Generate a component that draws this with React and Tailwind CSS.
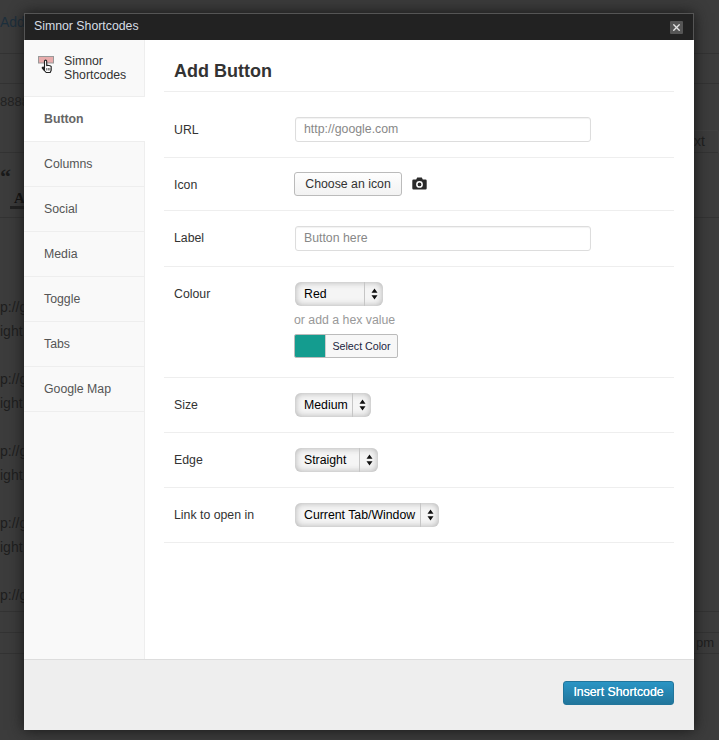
import { X } from "lucide-react";

const sideItems = ["Columns", "Social", "Media", "Toggle", "Tabs", "Google Map"];

const bgLines = [72, 72, 72, 72];

const Arrows = () => (
  <svg width="7" height="12" viewBox="0 0 7 12" className="block">
    <path d="M3.5 0.5 L6.5 4.8 L0.5 4.8 Z M3.5 11.5 L0.5 7.2 L6.5 7.2 Z" fill="#111" />
  </svg>
);

const Select = ({ label, width, textWidth }) => (
  <div
    className={`flex h-6 items-stretch rounded-[6px] bg-[#f5f5f5] text-[12.3px] text-black shadow-[inset_0_0_7px_#ababab] ${width}`}
  >
    <div className={`flex items-center pl-[9px] ${textWidth}`}>{label}</div>
    <div className="w-px bg-[#c6c6c6]" />
    <div className="flex flex-1 items-center justify-center">
      <Arrows />
    </div>
  </div>
);

const Row = ({ label, height, labelClass, className, children }) => (
  <div className={`flex border-b border-[#eeeeee] px-[10px] ${height} ${className || "items-center"}`}>
    <div className={`w-[120px] shrink-0 text-[12.3px] text-[#333] ${labelClass || ""}`}>{label}</div>
    <div className="flex-1">{children}</div>
  </div>
);

const TextBox = ({ placeholder }) => (
  <div className="ml-px flex h-[25px] w-[296px] items-center rounded-[3px] border border-[#dddddd] bg-white px-2 text-[12.3px] text-[#888] shadow-[inset_0_1px_1px_#f2f2f2]">
    {placeholder}
  </div>
);

const App = () => {
  return (
    <div className="relative h-[740px] w-[719px] overflow-hidden bg-[#3c3c3c] font-['Liberation_Sans',Arial,sans-serif]">
      {/* page behind the modal */}
      <div className="flex h-full flex-col text-[14px] text-[#1e1e1e]">
        <div className="h-[54px] border-b border-[#333] pt-[12px] text-[#1c2f3c]">Add</div>
        <div className="h-[30px] border-b border-[#333]" />
        <div className="flex h-[69px] justify-between border-b border-[#333]">
          <div className="pt-[8px] text-[13px] text-[#222]">8888</div>
          <div className="mt-[46px] h-[23px] w-[30px] rounded-t-[2px] border border-b-0 border-[#404040] pl-[4px] text-[14px]">xt</div>
        </div>
        <div className="h-[65px] border-b border-[#333]">
          <div className="h-[38px] pt-[12px] font-['Liberation_Serif',serif] text-[22px] font-bold leading-[24px] text-[#1a1a1a]">“</div>
          <div className="ml-[14px] font-['Liberation_Serif',serif] text-[15px] font-bold leading-[14px] text-[#111]">A</div>
          <div className="ml-[10px] mt-px h-[3px] w-[14px] bg-[#222]" />
        </div>
        <div className="h-[394px] border-b border-[#333] pt-[77px]">
          {bgLines.map((h, i) => (
            <div key={i} className="h-[72px] leading-[24px]">
              <div>p://g</div>
              <div>ight</div>
            </div>
          ))}
          <div className="leading-[24px]">p://g</div>
        </div>
        <div className="h-[21px] border-b border-[#333]" />
        <div className="flex h-[21px] justify-end border-b border-[#333] pr-[5px] text-[13px]">pm</div>
      </div>

      {/* modal */}
      <div className="absolute left-[24px] top-[13px] flex h-[717px] w-[670px] flex-col bg-white shadow-[0_0_14px_#161616]">
        <div className="flex h-[27px] shrink-0 items-center justify-between border-t border-l border-r border-[#555] bg-[#222222] pb-[2px] pl-[9px] pr-[10px] text-[12.3px] text-[#d6dde2]">
          <span>Simnor Shortcodes</span>
          <span className="mt-[2px] flex h-[13px] w-[13px] items-center justify-center rounded-[1px] bg-[#555]">
            <X size={11} strokeWidth={3} color="#e4e4e4" />
          </span>
        </div>

        <div className="flex min-h-0 flex-1">
          <div className="w-[121px] shrink-0 border-r border-[#eeeeee] bg-[#f9f9f9] text-[12.3px] text-[#555]">
            <div className="flex h-[57px] border-b border-[#eeeeee] pl-[14px] pt-[14px]">
              <svg width="17" height="19" viewBox="0 0 17 19" className="mt-[2px] shrink-0">
                <rect x="0.5" y="0.5" width="15" height="6.5" fill="#e8acac" stroke="#999" />
                <path d="M6.5 14.5V5.2a1.1 1.1 0 0 1 2.2 0V9.6l1-.3 1.2.2 1.1.3 1.2.6v3.8l-1 2.3H8.2l-2.5-2.7-1.5-2 1-.8Z" fill="#fff" stroke="#222" strokeWidth="1.1" strokeLinejoin="round" />
                <path d="M8.7 12v2.5M10.3 12v2.5M11.9 12v2.5" stroke="#444" strokeWidth="0.8" />
              </svg>
              <div className="ml-[9px] leading-[14px] text-[#333]">
                Simnor
                <br />
                Shortcodes
              </div>
            </div>
            <div className="-mr-px flex h-[45px] items-center border-b border-[#eeeeee] bg-white pl-5 font-bold text-[#666]">Button</div>
            {sideItems.map((item) => (
              <div key={item} className="flex h-[45px] items-center border-b border-[#eeeeee] pl-5">
                {item}
              </div>
            ))}
          </div>

          <div className="flex-1 pl-[19px] pr-5">
            <div className="flex h-[52px] items-center border-b border-[#eeeeee] px-[10px] pt-[11px] text-[18px] font-bold text-[#333]">
              Add Button
            </div>
            <Row label="URL" height="h-[66px]" className="items-center pt-[10px]" labelClass="mt-[2px]">
              <TextBox placeholder="http://google.com" />
            </Row>
            <Row label="Icon" height="h-[53px]" labelClass="mt-[2px]">
              <div className="flex items-center">
                <div className="flex h-6 w-[108px] items-center justify-center rounded-[3px] border border-[#bbbbbb] bg-gradient-to-b from-[#fefefe] to-[#f2f2f2] text-[12.3px] text-[#333]">
                  Choose an icon
                </div>
                <svg width="15" height="13" viewBox="0 0 15 13" className="mb-[2px] ml-[10px]">
                  <path
                    fillRule="evenodd"
                    fill="#2a2a2a"
                    d="M5.2 0.5h4.6L10.8 2.5h2.7a1.2 1.2 0 0 1 1.2 1.2v7.6a1.2 1.2 0 0 1-1.2 1.2h-12A1.2 1.2 0 0 1 .3 11.3V3.7A1.2 1.2 0 0 1 1.5 2.5H4.2ZM7.5 4a3.4 3.4 0 1 0 0 6.8a3.4 3.4 0 0 0 0-6.8ZM7.5 5.5a1.9 1.9 0 1 1 0 3.8a1.9 1.9 0 0 1 0-3.8Z"
                  />
                </svg>
              </div>
            </Row>
            <Row label="Label" height="h-[56px]">
              <TextBox placeholder="Button here" />
            </Row>
            <Row label="Colour" height="h-[111px]" className="items-start pt-[15px]" labelClass="mt-[3px]">
              <div className="ml-px">
                <Select label="Red" width="w-[88px]" textWidth="w-[69px]" />
              </div>
              <div className="mt-[7px] text-[12.3px] leading-[14px] text-[#999]">or add a hex value</div>
              <div className="mt-[7px] flex h-6 w-[104px] overflow-hidden rounded-[2px] border border-[#bbbbbb] bg-[#f7f7f7] text-[10.7px] text-[#1a2440]">
                <div className="w-[30px] bg-[#149c8f]" />
                <div className="flex flex-1 items-center justify-center border-l border-[#cccccc]">Select Color</div>
              </div>
            </Row>
            <Row label="Size" height="h-[55px]">
              <div className="ml-px">
                <Select label="Medium" width="w-[76px]" textWidth="w-[57px]" />
              </div>
            </Row>
            <Row label="Edge" height="h-[55px]">
              <div className="ml-px">
                <Select label="Straight" width="w-[83px]" textWidth="w-[64px]" />
              </div>
            </Row>
            <Row label="Link to open in" height="h-[55px]">
              <div className="ml-px">
                <Select label="Current Tab/Window" width="w-[144px]" textWidth="w-[125px]" />
              </div>
            </Row>
          </div>
        </div>

        <div className="flex h-[71px] shrink-0 items-center justify-end border-t border-[#dddddd] bg-[#eeeeee] pr-5">
          <div className="mb-[5px] flex h-6 w-[111px] items-center justify-center rounded-[3px] border border-[#21759b] bg-gradient-to-b from-[#2a95c5] to-[#21759b] text-[12.3px] text-white [text-shadow:0_0_0.5px_#fff]">
            Insert Shortcode
          </div>
        </div>
      </div>
    </div>
  );
};

export default App;
